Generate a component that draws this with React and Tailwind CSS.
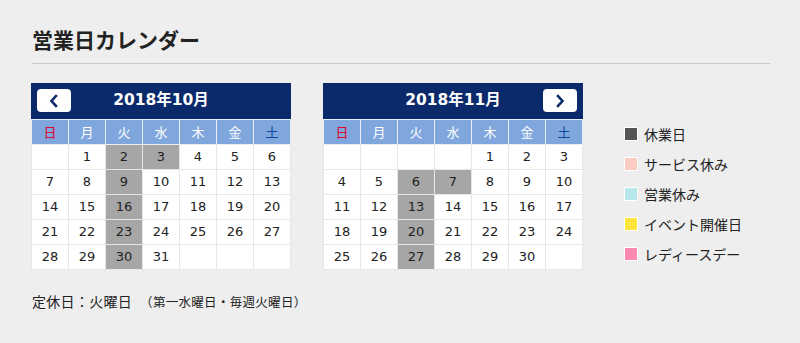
import React from "react";

const FONT = { fontFamily: '"DejaVu Sans", "Noto Sans CJK JP", sans-serif' };
const JFONT = { fontFamily: '"Noto Sans CJK JP", "DejaVu Sans", sans-serif' };

const DOW = ["日", "月", "火", "水", "木", "金", "土"];

function Chevron({ dir }) {
  return (
    <svg width="12" height="14" viewBox="0 0 12 14">
      {dir === "left" ? (
        <polyline points="8,2 3.5,7 8,12" fill="none" stroke="#0b2a6b" strokeWidth="2.6" strokeLinecap="square" />
      ) : (
        <polyline points="4,2 8.5,7 4,12" fill="none" stroke="#0b2a6b" strokeWidth="2.6" strokeLinecap="square" />
      )}
    </svg>
  );
}

function Calendar({ title, startDow, days, closed, nav }) {
  const cells = [];
  for (let i = 0; i < startDow; i++) cells.push(null);
  for (let d = 1; d <= days; d++) cells.push(d);
  while (cells.length < 35) cells.push(null);
  const rows = [];
  for (let r = 0; r < 5; r++) rows.push(cells.slice(r * 7, r * 7 + 7));
  return (
    <div className="w-[260px]">
      <div className="relative flex h-[36px] items-center justify-center bg-[#0b2a6b]">
        {nav === "prev" && (
          <div className="absolute left-[6px] top-[6px] flex h-[23px] w-[34px] items-center justify-center rounded-[4px] bg-white">
            <Chevron dir="left" />
          </div>
        )}
        {nav === "next" && (
          <div className="absolute right-[6px] top-[6px] flex h-[23px] w-[34px] items-center justify-center rounded-[4px] bg-white">
            <Chevron dir="right" />
          </div>
        )}
        <span className="text-[15.5px] font-bold text-white" style={FONT}>{title}</span>
      </div>
      <table className="w-[260px] table-fixed border-collapse" style={FONT}>
        <tbody>
          <tr className="h-[25px] bg-[#80a7dd]">
            {DOW.map((d, i) => (
              <td
                key={d}
                className={`border border-[#e8eef7] p-0 text-center text-[13px] ${i === 0 ? "text-[#e2002d]" : i === 6 ? "text-[#0b4aa0]" : "text-white"}`}
                style={JFONT}
              >
                {d}
              </td>
            ))}
          </tr>
          {rows.map((row, ri) => (
            <tr key={ri} className="h-[25px]">
              {row.map((d, ci) => (
                <td
                  key={ci}
                  className={`border border-[#e6e6e6] p-0 text-center text-[13px] text-[#222] ${d && closed.includes(d) ? "bg-[#a6a6a6]" : "bg-white"}`}
                >
                  {d ?? ""}
                </td>
              ))}
            </tr>
          ))}
        </tbody>
      </table>
    </div>
  );
}

const LEGEND = [
  ["休業日", "bg-[#555555]"],
  ["サービス休み", "bg-[#fccbc1]"],
  ["営業休み", "bg-[#b6e7eb]"],
  ["イベント開催日", "bg-[#ffe43b]"],
  ["レディースデー", "bg-[#ff88b1]"],
];

export default function App() {
  return (
    <div className="h-[343px] w-[800px] bg-[#eeeeee] px-[31px] pt-[25px] text-[#222]" style={JFONT}>
      <div className="mr-[-1px] ml-[1px] border-b border-[#c8c8c8] pb-[9px]">
        <h1 className="text-[21px] font-bold leading-[29px] text-[#222]">営業日カレンダー</h1>
      </div>
      <div className="mt-[19px] flex items-start">
        <Calendar title="2018年10月" startDow={1} days={31} closed={[2, 3, 9, 16, 23, 30]} nav="prev" />
        <div className="ml-[32px]">
          <Calendar title="2018年11月" startDow={4} days={30} closed={[6, 7, 13, 20, 27]} nav="next" />
        </div>
        <div className="ml-[41px] mt-[41px] flex flex-col gap-[10px]">
          {LEGEND.map(([label, color]) => (
            <div key={label} className="flex h-[20px] items-center">
              <span className={`h-[14px] w-[14px] border border-white ${color}`} />
              <span className="ml-[6px] text-[14px] text-[#222]">{label}</span>
            </div>
          ))}
        </div>
      </div>
      <div className="ml-[1px] mt-[21px] flex items-baseline text-[#222]">
        <span className="text-[14px] tracking-[0.3px]">定休日：火曜日</span>
        <span className="ml-[8px] text-[12.5px] tracking-[0.3px]">（第一水曜日・毎週火曜日）</span>
      </div>
    </div>
  );
}
